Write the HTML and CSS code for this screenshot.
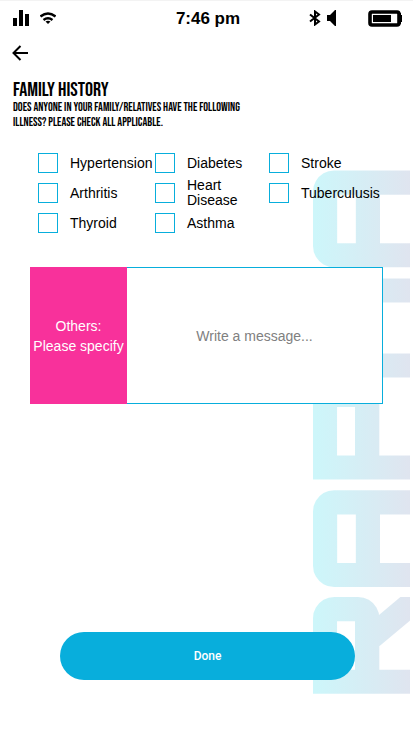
FILE: index.html
```html
<!DOCTYPE html>
<html lang="en">
<head>
<meta charset="utf-8">
<meta name="viewport" content="width=device-width, initial-scale=1">
<title>Family History</title>
<link rel="stylesheet" href="styles.css">
</head>
<body>
<div class="backdrop" aria-hidden="true"><div class="watermark">RAPHA</div></div>
<div class="screen">
  <header class="status">
    <div class="status-side">
      <svg width="16" height="16" viewBox="0 0 16 16"><path d="M0 8h4v8H0zM6 0h4v16H6zM12 4h4v12h-4z"/></svg>
      <svg class="wifi" width="16" height="12" viewBox="0 0 16 12" fill="none" stroke="#000" stroke-width="2.400"><path d="M.5 4.500Q8-1.500 15.500 4.500M3.500 8Q8 4.500 12.500 8"/><path d="M5.500 9.500Q8 8 10.500 9.500L8 12z" fill="#000" stroke="none"/></svg>
    </div>
    <time class="clock">7:46 pm</time>
    <div class="status-side status-right">
      <svg width="12" height="16" viewBox="0 0 12 16" fill="none" stroke="#000" stroke-width="2"><path d="M1 4.500l9 7L6 14.500v-13l4 3-9 7"/></svg>
      <svg class="speaker" width="9" height="16" viewBox="0 0 9 16"><path d="M0 5h3l5-5h1v16H8l-5-5H0z"/></svg>
      <svg width="35" height="17" viewBox="0 0 35 17"><rect x="2" y="2" width="29" height="13" rx="2" fill="none" stroke="#000" stroke-width="3.600"/><path d="M5 5h18v7H5zM32 3h1v2h1v7h-1v2h-1z"/></svg>
    </div>
  </header>
  <button class="back" type="button" aria-label="Back">
    <svg width="16" height="16" viewBox="0 0 16 16" fill="none" stroke="#000" stroke-width="2"><path d="M16 8H2M8.500 1L1.500 8l7 7"/></svg>
  </button>
  <main>
    <h1>FAMILY HISTORY</h1>
    <p class="question">DOES ANYONE IN YOUR FAMILY/RELATIVES HAVE THE FOLLOWING ILLNESS? PLEASE CHECK ALL APPLICABLE.</p>
    <form>
      <div class="options">
        <label><input type="checkbox">Hypertension</label>
        <label><input type="checkbox">Diabetes</label>
        <label><input type="checkbox">Stroke</label>
        <label><input type="checkbox">Arthritis</label>
        <label><input type="checkbox">Heart Disease</label>
        <label><input type="checkbox">Tuberculusis</label>
        <label><input type="checkbox">Thyroid</label>
        <label><input type="checkbox">Asthma</label>
      </div>
      <div class="others">
        <label for="others">Others:<br>Please specify</label>
        <textarea id="others" placeholder="Write a message..."></textarea>
      </div>
      <button class="done" type="button">Done</button>
    </form>
  </main>
</div>
</body>
</html>
```
FILE: styles.css
```css
* {
  box-sizing: border-box;
}

body {
  margin: 0;
  position: relative;
  background: #fff;
  color: #000;
  font: 14px/15px "Liberation Sans", Arial, sans-serif;
}

.screen {
  position: relative;
  min-height: 100vh;
  border-top: 1px solid #f3f3f3;
}

.backdrop {
  position: absolute;
  inset: 0;
  overflow: hidden;
}

.watermark {
  position: absolute;
  top: 165px;
  right: 0;
  writing-mode: vertical-rl;
  transform: rotate(180deg);
  font: 900 129px/108px "Orbitron", "DejaVu Sans", sans-serif;
  -webkit-text-stroke: 4px transparent;
  background: linear-gradient(to left, #cdf6fa 10%, #e0e4ef);
  background-clip: text;
  -webkit-background-clip: text;
  color: transparent;
}

.status {
  display: flex;
  align-items: center;
  height: 34px;
  padding: 0 10px 0 13px;
}

.status-side {
  flex: 1;
  display: flex;
  align-items: center;
  gap: 11px;
}

.status-right {
  justify-content: flex-end;
  gap: 6px;
}

.speaker {
  margin-right: 26px;
}

.clock {
  font-size: 17px;
  font-weight: bold;
}

.back {
  display: block;
  margin: 10px 0 0 12px;
  padding: 0;
  border: 0;
  background: none;
}

.back svg {
  display: block;
}

h1 {
  margin: 19px 13px 0;
  font: 20px/20px "Bebas Neue", "Liberation Sans Narrow", sans-serif;
}

.question {
  max-width: 240px;
  margin: 0 13px;
  font: 12px/15px "Bebas Neue", "Liberation Sans Narrow", sans-serif;
}

.options {
  display: grid;
  grid-template-columns: 117fr 114fr 144fr;
  grid-auto-rows: 30px;
  margin: 18px 0 0 38px;
}

.options label {
  display: flex;
  align-items: center;
  gap: 12px;
}

.options input {
  appearance: none;
  flex: none;
  width: 20px;
  height: 20px;
  margin: 0;
  border: 1px solid #08aedc;
  background: #fff;
}

.others {
  display: flex;
  height: 137px;
  margin: 29px 30px 0;
}

.others label {
  display: flex;
  align-items: center;
  justify-content: center;
  flex: none;
  width: 97px;
  background: #f8319b;
  color: #fff;
  line-height: 20px;
  text-align: center;
}

.others textarea {
  flex: 1;
  min-width: 0;
  padding: 61px 12px 12px;
  border: 1px solid #08aedc;
  border-left: 0;
  border-radius: 0;
  background: #fff;
  font: inherit;
  text-align: center;
  resize: none;
}

.others textarea::placeholder {
  color: #808080;
}

.done {
  display: block;
  width: calc(100% - 118px);
  height: 48px;
  margin: 228px 58px 0 60px;
  border: 0;
  border-radius: 24px;
  background: #08aedc;
  color: #fff;
  font: 500 12px/16px Roboto, sans-serif;
}
```
